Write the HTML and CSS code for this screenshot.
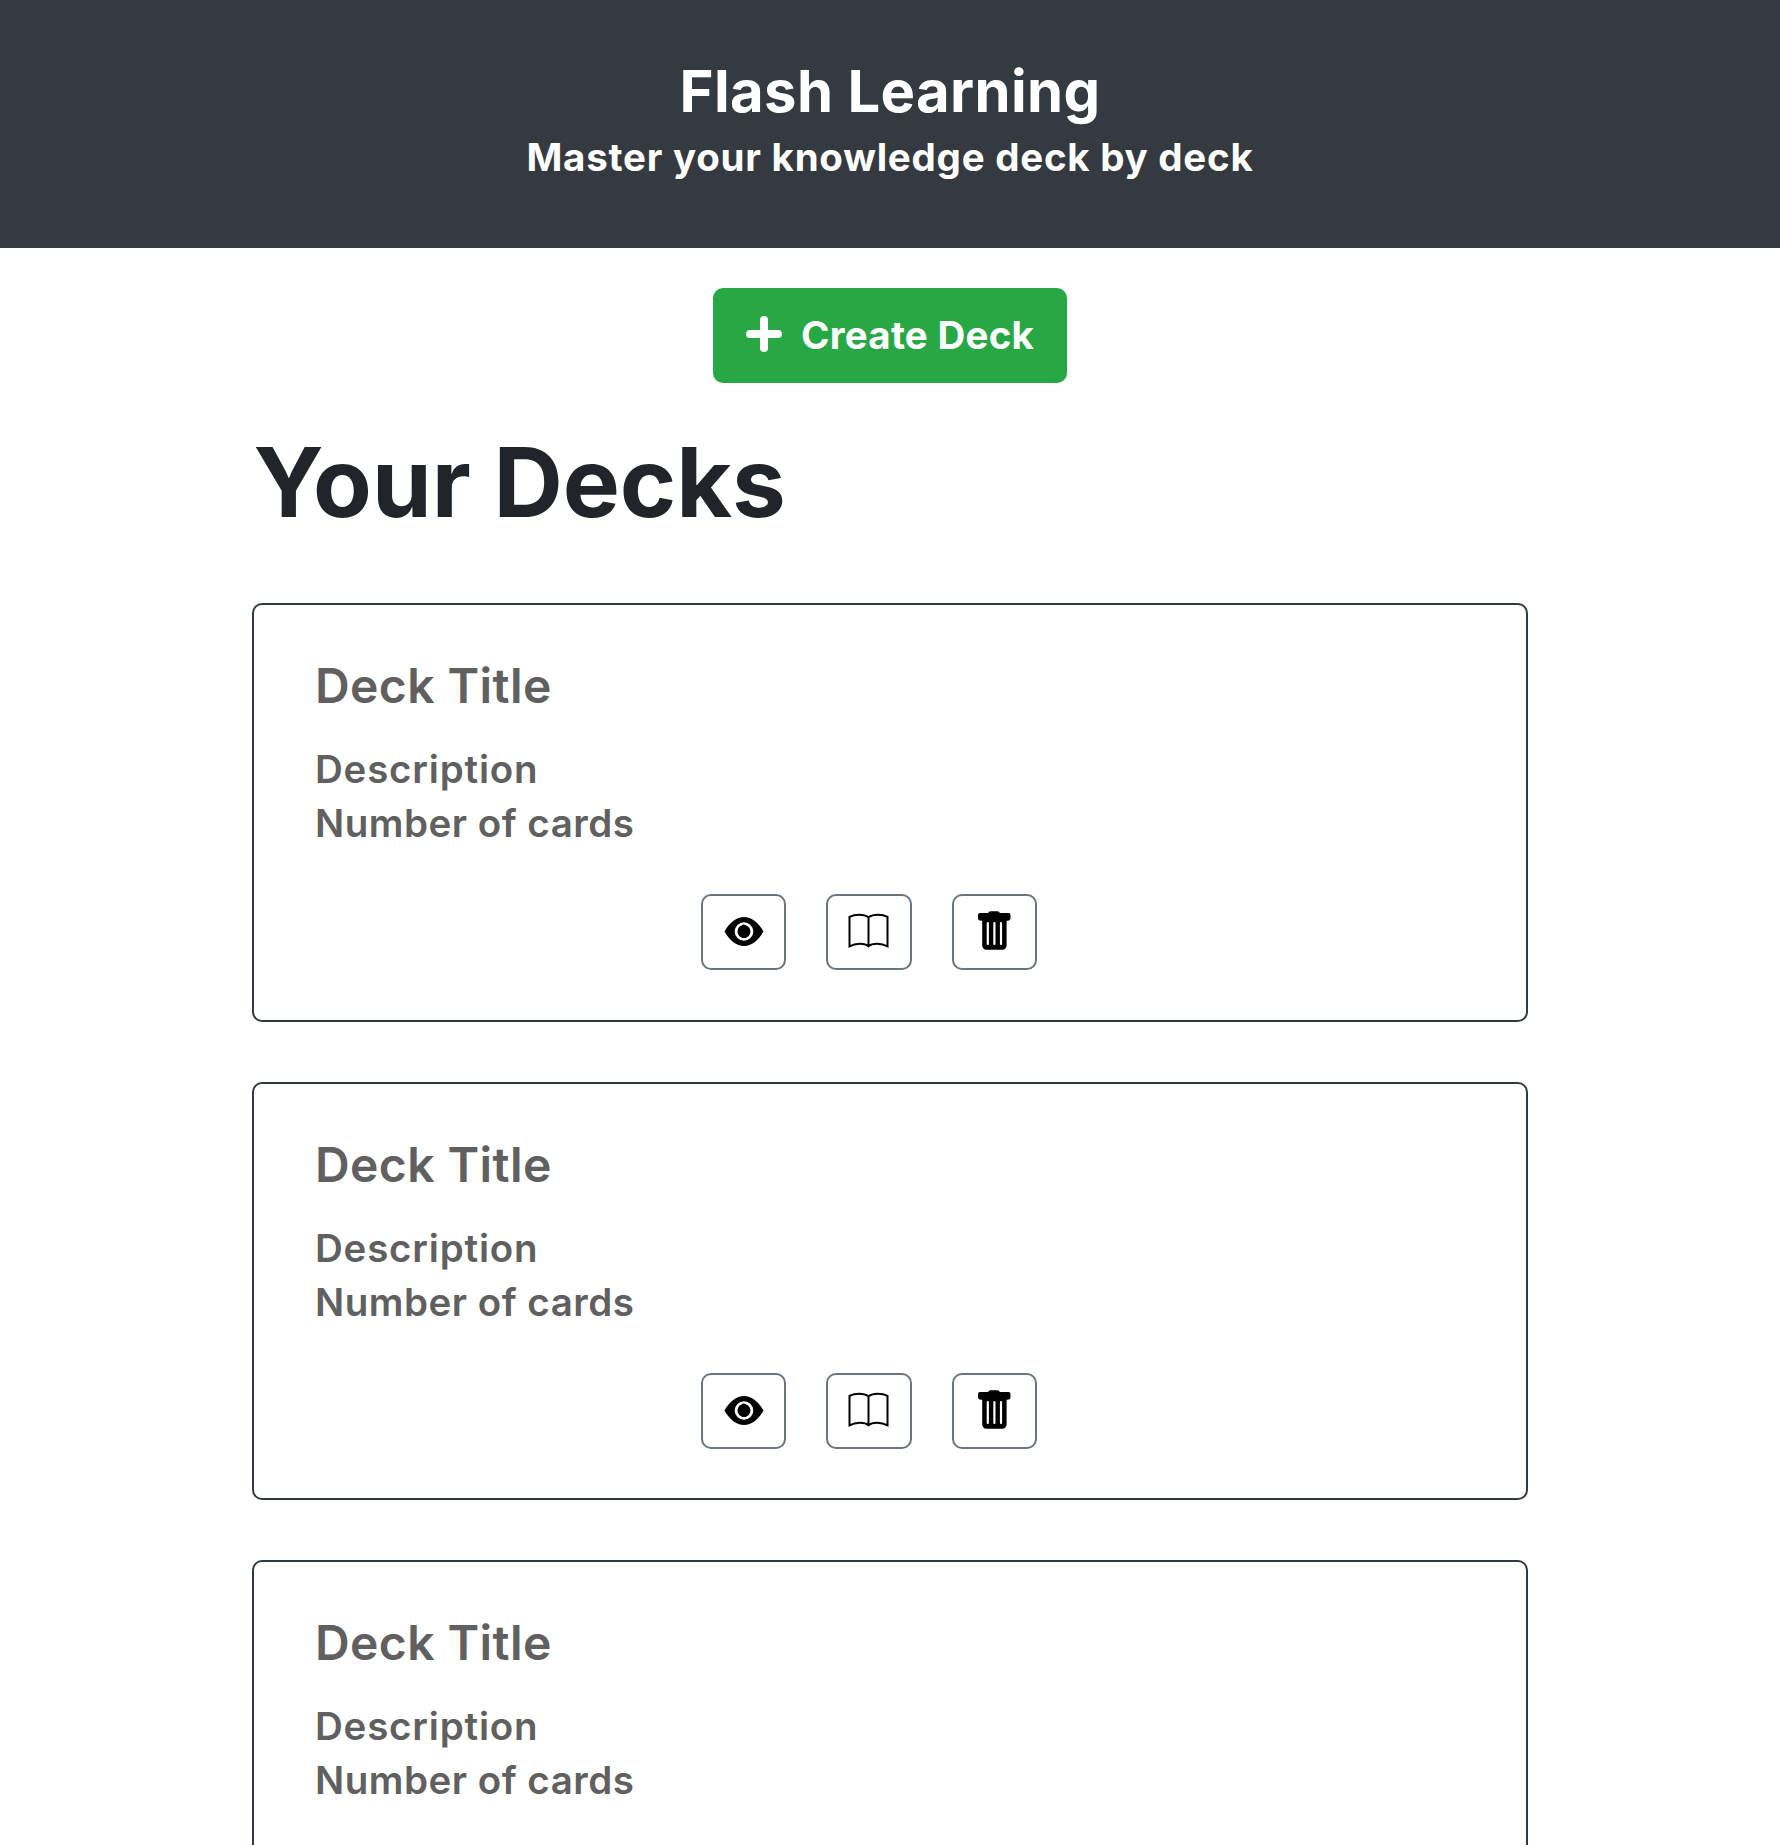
FILE: index.html
```html
<!DOCTYPE html>
<html lang="en">
<head>
<meta charset="utf-8">
<title>Flash Learning</title>
<link rel="stylesheet" href="styles.css">
</head>
<body>
<svg class="sprite" aria-hidden="true">
  <symbol id="eye" viewBox="0 0 40 40"><path fill-rule="evenodd" transform="translate(.5 -.5)" d="M0 20C5 11 12 5.500 19.500 5.500S34 11 39 20C34 29 27 34.500 19.500 34.500S5 29 0 20ZM19.500 10.700a9.300 9.300 0 1 0 0 18.600a9.300 9.300 0 0 0 0-18.600ZM16.700 14.300a3 2.500 0 0 1 4.500-.5a6.500 6.500 0 1 1-7.600 3.400a5 5 0 0 1 3.100-2.900Z"/></symbol>
  <symbol id="book" viewBox="0 0 40 40"><path fill="none" stroke="currentColor" stroke-width="2" d="M19.500 5.200C14.500 1.700 5.500 2.200 .5 4.900V34.300C6.500 31.300 15.500 30.800 19.500 34.300C23.500 30.800 32.500 31.300 38.500 34.300V4.900C33.500 2.200 24.500 1.700 19.500 5.200ZM19.500 5V34.800"/></symbol>
  <symbol id="trash" viewBox="0 0 40 40"><path fill-rule="evenodd" d="M15.500-.8h7a2.300 2.300 0 0 1 2.300 1.800h8.700a2 2 0 0 1 2 2.200v2.600a3 3 0 0 1-3 3h-.9V33.500a4.200 4.200 0 0 1-4.200 4.200H11.400A4.200 4.200 0 0 1 7.200 33.500V8.800h-1.200a3 3 0 0 1-3-3V3a2 2 0 0 1 2-2H13.200a2.300 2.300 0 0 1 2.300-1.800ZM11.700 11.200v20.700a1.100 1.100 0 0 0 2.200 0V11.200a1.100 1.100 0 0 0-2.200 0ZM18.300 11.200v20.700a1.100 1.100 0 0 0 2.200 0V11.200a1.100 1.100 0 0 0-2.200 0ZM24.900 11.200v20.700a1.100 1.100 0 0 0 2.200 0V11.200a1.100 1.100 0 0 0-2.200 0Z"/></symbol>
</svg>
<header class="header">
  <h1 class="brand">Flash Learning</h1>
  <p class="tagline">Master your knowledge deck by deck</p>
</header>
<main class="main">
  <button class="create"><svg class="plus" viewBox="0 0 36 36"><path d="M18 4v28M4 18h28"/></svg><span class="create-label">Create Deck</span></button>
  <h2 class="heading">Your Decks</h2>
  <section class="decks">
    <article class="card">
      <h3 class="title">Deck Title</h3>
      <p class="description">Description</p>
      <p class="count">Number of cards</p>
      <div class="actions">
        <button class="action" aria-label="View"><svg class="icon"><use href="#eye"/></svg></button>
        <button class="action study" aria-label="Study"><svg class="icon"><use href="#book"/></svg></button>
        <button class="action" aria-label="Delete"><svg class="icon"><use href="#trash"/></svg></button>
      </div>
    </article>
    <article class="card">
      <h3 class="title">Deck Title</h3>
      <p class="description">Description</p>
      <p class="count">Number of cards</p>
      <div class="actions">
        <button class="action" aria-label="View"><svg class="icon"><use href="#eye"/></svg></button>
        <button class="action study" aria-label="Study"><svg class="icon"><use href="#book"/></svg></button>
        <button class="action" aria-label="Delete"><svg class="icon"><use href="#trash"/></svg></button>
      </div>
    </article>
    <article class="card">
      <h3 class="title">Deck Title</h3>
      <p class="description">Description</p>
      <p class="count">Number of cards</p>
      <div class="actions">
        <button class="action" aria-label="View"><svg class="icon"><use href="#eye"/></svg></button>
        <button class="action study" aria-label="Study"><svg class="icon"><use href="#book"/></svg></button>
        <button class="action" aria-label="Delete"><svg class="icon"><use href="#trash"/></svg></button>
      </div>
    </article>
  </section>
</main>
</body>
</html>
```
FILE: styles.css
```css
* { box-sizing: border-box; margin: 0; padding: 0; }
html { overflow: hidden; }
body { height: 1845px; overflow: hidden; background: #fff; color: #212529; font-family: Inter, "Liberation Sans", sans-serif; font-weight: 600; white-space: nowrap; }
button { font: inherit; }
.sprite { display: none; }
.header { height: 248px; padding-top: 55px; background: #343a40; color: #fff; text-align: center; }
.brand { font-size: 58px; line-height: 72px; font-weight: 700; letter-spacing: 0.35px; }
.tagline { font-size: 38.5px; line-height: 60px; font-weight: 700; letter-spacing: 0.75px; }
.main { width: 1276px; margin: 0 auto; padding-top: 40px; }
.create { display: flex; align-items: center; width: 354px; height: 95px; margin: 0 auto; padding-left: 33px; border: 0; border-radius: 10px; background: #28a745; color: #fff; font-size: 38.5px; font-weight: 700; }
.plus { width: 36px; height: 36px; margin: 0 19px 3px 0; fill: none; stroke: #fff; stroke-width: 8; stroke-linecap: round; }
.create-label { padding-bottom: 2px; line-height: 60px; letter-spacing: 0.25px; }
.heading { margin: 39px 0 61px 1.5px; font-size: 96px; line-height: 120px; font-weight: 700; letter-spacing: -0.05px; }
.decks { display: flex; flex-direction: column; gap: 60px; }
.card { height: 418.500px; padding: 51px 60px 49px 61px; border: 2px solid #343a40; border-radius: 10px; color: #606060; }
.title { font-size: 48px; line-height: 60px; font-weight: 600; margin-bottom: 26px; letter-spacing: 0.4px; }
.description, .count { font-size: 38.5px; line-height: 54px; letter-spacing: 0.8px; }
.count { letter-spacing: 0.5px; }
.actions { display: flex; justify-content: center; gap: 40px; margin-top: 44px; padding-right: 43px; }
.action { display: flex; align-items: center; justify-content: center; width: 85px; height: 76px; border: 2px solid #6c757d; border-radius: 10px; background: #fff; color: #000; }
.study { width: 86px; }
.icon { width: 40px; height: 40px; fill: currentColor; overflow: visible; }
.icon use, .sprite symbol { overflow: visible; }
```
